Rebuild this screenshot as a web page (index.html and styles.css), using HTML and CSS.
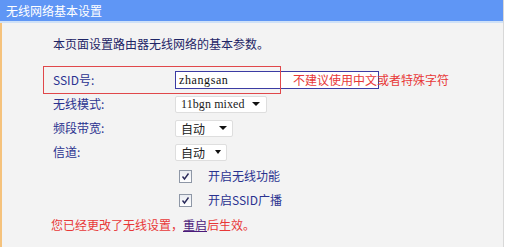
FILE: index.html
```html
<!DOCTYPE html>
<html lang="zh-CN">
<head>
<meta charset="utf-8">
<title>无线网络基本设置</title>
<link rel="stylesheet" href="styles.css">
</head>
<body>
<div class="panel">
  <div class="title">无线网络基本设置</div>
  <div class="content">
    <p class="intro">本页面设置路由器无线网络的基本参数。</p>
    <div class="form">
      <div class="annot-red"></div>
      <div class="row">
        <span class="label">SSID号:</span>
        <span class="input">zhangsan</span>
        <span class="hint">不建议使用中文或者特殊字符</span>
      </div>
      <div class="row">
        <span class="label">无线模式:</span>
        <span class="select w-mode"><span class="val mono">11bgn mixed</span><span class="arrow"></span></span>
      </div>
      <div class="row">
        <span class="label">频段带宽:</span>
        <span class="select w-band"><span class="val">自动</span><span class="arrow"></span></span>
      </div>
      <div class="row">
        <span class="label">信道:</span>
        <span class="select w-chan"><span class="val">自动</span><span class="arrow"></span></span>
      </div>
      <div class="row check-row">
        <span class="checkbox"><svg width="9" height="9" viewBox="0 0 9 9"><path d="M1.5 4.5 L3.5 7 L7.5 1.5" fill="none" stroke="#2a2a5a" stroke-width="1.4"/></svg></span>
        <span class="check-label">开启无线功能</span>
      </div>
      <div class="row check-row">
        <span class="checkbox"><svg width="9" height="9" viewBox="0 0 9 9"><path d="M1.5 4.5 L3.5 7 L7.5 1.5" fill="none" stroke="#2a2a5a" stroke-width="1.4"/></svg></span>
        <span class="check-label">开启SSID广播</span>
      </div>
    </div>
    <p class="notice">您已经更改了无线设置，<a class="reboot" href="#">重启</a>后生效。</p>
  </div>
</div>
</body>
</html>
```
FILE: styles.css
```css
* { box-sizing: border-box; }
html, body { margin: 0; padding: 0; background: #ffffff; }
body {
  font-family: "Noto Sans CJK SC", "Noto Sans", sans-serif;
  font-size: 12px;
}
.panel {
  width: 504px;
  height: 247px;
  background: #f3f3f3;
  border-right: 1px solid #d8d8d8;
  display: flex;
  flex-direction: column;
}
.title {
  height: 23px;
  background: #5f96f5;
  border-bottom: 2px solid #cfe1f7;
  color: #ffffff;
  font-size: 12px;
  line-height: 21px;
  padding-left: 6px;
}
.content {
  flex: 1;
  border-left: 2px solid #f5c27c;
  padding: 13px 0 0 51px;
}
.intro {
  margin: 0;
  line-height: 16px;
  color: #1e2566;
}
.form {
  position: relative;
  margin-top: 16px;
}
.annot-red {
  position: absolute;
  left: -10px;
  top: -2px;
  width: 238px;
  height: 28px;
  border: 1px solid #e0474a;
  pointer-events: none;
}
.row {
  display: flex;
  align-items: center;
  height: 24px;
  white-space: nowrap;
}
.label {
  width: 122px;
  flex: none;
  color: #2a3290;
  line-height: 16px;
}
.input {
  width: 204px;
  flex: none;
  height: 18px;
  background: #ffffff;
  border: 1px solid #3b3ba3;
  font-family: "Liberation Serif", serif;
  font-size: 12px;
  letter-spacing: 0.6px;
  line-height: 16px;
  padding-left: 3px;
  color: #111;
}
.hint {
  position: relative;
  margin-left: -86px;
  color: #e83838;
  line-height: 16px;
}
.select {
  display: flex;
  flex: none;
  align-items: center;
  justify-content: space-between;
  height: 17px;
  background: #ffffff;
  border: 1px solid #dedede;
  border-radius: 2px;
  padding: 0 6px 0 5px;
  color: #222;
  white-space: nowrap;
}
.select .val { line-height: 15px; }
.select .mono {
  font-family: "Liberation Serif", serif;
  font-size: 12px;
  letter-spacing: 0.1px;
}
.arrow {
  width: 0;
  height: 0;
  border-left: 4px solid transparent;
  border-right: 4px solid transparent;
  border-top: 4px solid #111;
}
.w-mode { width: 92px; }
.w-band { width: 58px; padding-right: 5px; }
.w-chan { width: 52px; padding-right: 5px; }
.w-chan .arrow { border-left-width: 3px; border-right-width: 3px; }
.check-row { padding-left: 126px; }
.checkbox {
  width: 13px;
  height: 13px;
  flex: none;
  border: 1px solid #8e97a6;
  background: linear-gradient(#e9ecf1, #ffffff);
  display: flex;
  align-items: center;
  justify-content: center;
}
.check-label {
  margin-left: 16px;
  color: #2a3290;
  line-height: 16px;
}
.notice {
  margin: 5px 0 0 -2px;
  line-height: 16px;
  color: #e83838;
}
.reboot {
  color: #4b1a7a;
  text-decoration: underline;
}
```
